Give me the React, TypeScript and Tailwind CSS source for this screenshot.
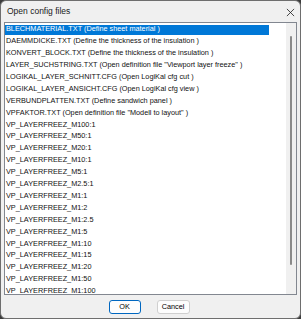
import React from 'react';

const items = [
  'BLECHMATERIAL.TXT (Define sheet material )',
  'DAEMMDICKE.TXT (Define the thickness of the insulation )',
  'KONVERT_BLOCK.TXT (Define the thickness of the insulation )',
  'LAYER_SUCHSTRING.TXT (Open definition file "Viewport layer freeze" )',
  'LOGIKAL_LAYER_SCHNITT.CFG (Open LogiKal cfg cut )',
  'LOGIKAL_LAYER_ANSICHT.CFG (Open LogiKal cfg view )',
  'VERBUNDPLATTEN.TXT (Define sandwich panel )',
  'VPFAKTOR.TXT (Open definition file "Modell to layout" )',
  'VP_LAYERFREEZ_M100:1',
  'VP_LAYERFREEZ_M50:1',
  'VP_LAYERFREEZ_M20:1',
  'VP_LAYERFREEZ_M10:1',
  'VP_LAYERFREEZ_M5:1',
  'VP_LAYERFREEZ_M2.5:1',
  'VP_LAYERFREEZ_M1:1',
  'VP_LAYERFREEZ_M1:2',
  'VP_LAYERFREEZ_M1:2.5',
  'VP_LAYERFREEZ_M1:5',
  'VP_LAYERFREEZ_M1:10',
  'VP_LAYERFREEZ_M1:15',
  'VP_LAYERFREEZ_M1:20',
  'VP_LAYERFREEZ_M1:50',
  'VP_LAYERFREEZ_M1:100',
];

const App: React.FC = () => {
  const selected = 0;

  return (
    <div className="w-[301px] h-[319px] bg-[#3c3c3c] font-['Liberation_Sans',Arial,sans-serif]">
      <div className="w-full h-full flex flex-col bg-[#f0f0f0] border border-[#6e6e6e] rounded-[6px] overflow-hidden">
        {/* Title bar */}
        <div className="h-[21px] flex items-center justify-between pl-[6px] pr-[4px] shrink-0">
          <span className="text-[8.5px] text-[#1a1a1a]">Open config files</span>
          <svg width="9" height="9" viewBox="0 0 10 10" className="mr-[1px] mt-[1px]">
            <path d="M1 1 L9 9 M9 1 L1 9" stroke="#222" strokeWidth="0.9" />
          </svg>
        </div>

        {/* List box */}
        <div className="mx-[3px] h-[273px] flex bg-white border border-[#828790] shrink-0 overflow-hidden">
          <div className="flex-1 pt-[1px] overflow-hidden">
            {items.map((item, i) => (
              <div key={i} className="h-[11.9px] flex items-center text-[7.3px] whitespace-nowrap">
                {i === selected ? (
                  <div className="h-[10px] w-[264px] flex items-center pl-[1px] bg-[#0078d7] text-white">{item}</div>
                ) : (
                  <div className="pl-[1px] text-[#111]">{item}</div>
                )}
              </div>
            ))}
          </div>
          {/* Scrollbar */}
          <div className="w-[10px] bg-[#f0f0f0] flex justify-center pt-[13px] shrink-0">
            <div className="w-[2px] h-[229px] bg-[#8a8a8a] rounded-full" />
          </div>
        </div>

        {/* Buttons */}
        <div className="flex-1 flex items-center justify-center gap-[16px] pt-[1px]">
          <button className="w-[32px] h-[14px] bg-[#fdfdfd] border border-[#0067c0] rounded-[3px] text-[7.3px] text-black flex items-center justify-center ml-[-3px]">
            OK
          </button>
          <button className="w-[33px] h-[14px] bg-[#fdfdfd] border border-[#d0d0d0] rounded-[3px] text-[7.3px] text-black flex items-center justify-center">
            Cancel
          </button>
        </div>
      </div>
    </div>
  );
};

export default App;
